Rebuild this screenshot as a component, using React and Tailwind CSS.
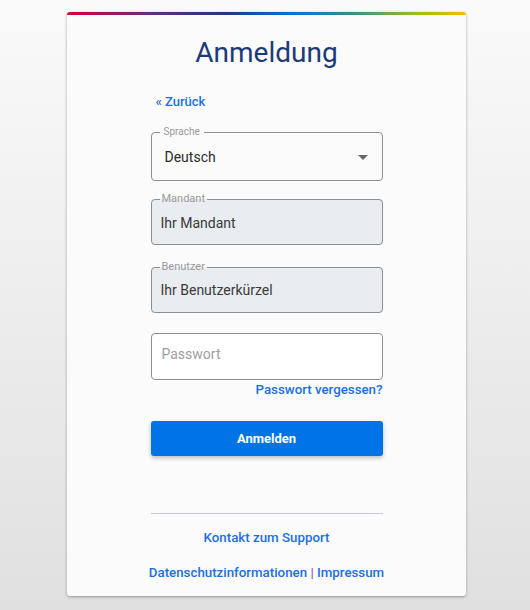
export default function App() {
  const font = { fontFamily: 'Roboto, "Liberation Sans", sans-serif' };

  return (
    <div
      className="min-h-[610px] bg-gradient-to-b from-[#fafafa] to-[#e0e0e0] pt-[12px] pb-[13px]"
      style={font}
    >
      <div className="ml-[67px] w-[399px] rounded-[3px] bg-[#fbfbfc] shadow-[0_1px_3px_rgba(0,0,0,0.35)] overflow-hidden">
        {/* colour strip */}
        <div className="h-[3px] bg-[linear-gradient(90deg,#d9003c,#6a2b80_20%,#1d3a7c_40%,#0a6fdf_56%,#3a8f86_72%,#8fbc22_86%,#f6bd00)]" />

        <h1 className="pt-[21px] text-center text-[28px] leading-[34px] text-[#1b3a7a]">
          Anmeldung
        </h1>

        <div className="mx-auto w-[232px] pt-[24px]">
          <a className="ml-[5px] block text-[13px] font-medium leading-[16px] text-[#1b6fe0]">
            « Zurück
          </a>

          {/* Sprache */}
          <fieldset className="mt-[17px] rounded-[4px] border border-[#8e8e8e] px-[8px]">
            <legend className="px-[4px] text-[10px] leading-[10px] text-[#9a9a9a]">Sprache</legend>
            <div className="flex h-[43px] items-center justify-between pb-[3px] pl-[5px] pr-[6px] text-[14px] text-[#2a2a2a]">
              <span>Deutsch</span>
              <svg width="10" height="5" viewBox="0 0 10 5">
                <path d="M0 0h10L5 5z" fill="#666" />
              </svg>
            </div>
          </fieldset>

          {/* Mandant */}
          <fieldset className="mt-[13px] rounded-[4px] border border-[#8e8e8e] bg-[#e9ecf0] px-[8px]">
            <legend className="px-[2px] text-[11px] leading-[10px] text-[#9a9a9a]">Mandant</legend>
            <div className="flex h-[40px] items-center pb-[2px] pl-[1px] text-[14px] text-[#3a3a3a]">
              Ihr Mandant
            </div>
          </fieldset>

          {/* Benutzer */}
          <fieldset className="mt-[17px] rounded-[4px] border border-[#8e8e8e] bg-[#e9ecf0] px-[8px]">
            <legend className="px-[2px] text-[11px] leading-[10px] text-[#9a9a9a]">Benutzer</legend>
            <div className="flex h-[40px] items-center pb-[3px] pl-[1px] text-[14px] text-[#3a3a3a]">
              Ihr Benutzerkürzel
            </div>
          </fieldset>

          {/* Passwort */}
          <div className="mt-[20px] flex h-[47px] items-start rounded-[4px] border border-[#8e8e8e] bg-white pl-[10px] pt-[11px] text-[14px] leading-[18px] text-[#9e9e9e]">
            Passwort
          </div>

          <div className="mt-[2px] text-right text-[13.3px] font-medium leading-[16px] text-[#1b6fe0]">
            Passwort vergessen?
          </div>

          <button className="mt-[23px] h-[35px] w-full rounded-[3px] bg-[#0073e6] text-[13px] font-bold text-white shadow-[0_2px_4px_rgba(0,0,0,0.25)]">
            Anmelden
          </button>

          <div className="mt-[57px] h-px bg-[#c5cbd6]" />
        </div>

        <div className="pt-[16px] text-center text-[13.3px] font-medium leading-[16px] text-[#1b6fe0]">
          Kontakt zum Support
        </div>
        <div className="pt-[19px] pb-[15px] text-center text-[13.3px] font-medium leading-[16px] text-[#1b6fe0]">
          Datenschutzinformationen <span className="text-[#7a5aa0]">|</span> Impressum
        </div>
      </div>
    </div>
  );
}
